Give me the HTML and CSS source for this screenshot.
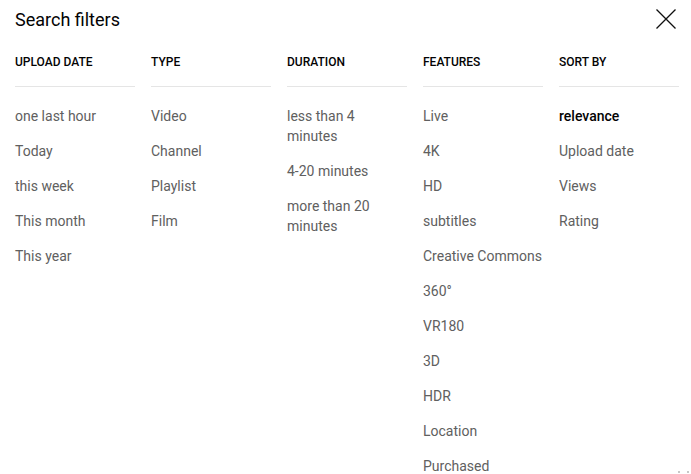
FILE: index.html
```html
<!DOCTYPE html>
<html lang="en">
<head>
<meta charset="utf-8">
<title>Search filters</title>
<link rel="stylesheet" href="styles.css">
</head>
<body>
<div class="dialog">
  <div class="title-row">
    <h2 class="title">Search filters</h2>
    <button class="close" aria-label="Close">
      <svg width="20" height="20" viewBox="0 0 20 20"><path d="M0.5 0.5 L19.5 19.5 M19.5 0.5 L0.5 19.5" stroke="#0f0f0f" stroke-width="1.3" fill="none"/></svg>
    </button>
  </div>
  <div class="groups">
    <div class="group">
      <h4 class="group-head">Upload date</h4>
      <ul class="options">
        <li>one last hour</li>
        <li>Today</li>
        <li>this week</li>
        <li>This month</li>
        <li>This year</li>
      </ul>
    </div>
    <div class="group">
      <h4 class="group-head">Type</h4>
      <ul class="options">
        <li>Video</li>
        <li>Channel</li>
        <li>Playlist</li>
        <li>Film</li>
      </ul>
    </div>
    <div class="group">
      <h4 class="group-head">Duration</h4>
      <ul class="options">
        <li>less than 4 minutes</li>
        <li>4-20 minutes</li>
        <li>more than 20 minutes</li>
      </ul>
    </div>
    <div class="group">
      <h4 class="group-head">Features</h4>
      <ul class="options">
        <li>Live</li>
        <li>4K</li>
        <li>HD</li>
        <li>subtitles</li>
        <li>Creative Commons</li>
        <li>360°</li>
        <li>VR180</li>
        <li>3D</li>
        <li>HDR</li>
        <li>Location</li>
        <li>Purchased</li>
      </ul>
    </div>
    <div class="group">
      <h4 class="group-head">Sort by</h4>
      <ul class="options">
        <li class="selected">relevance</li>
        <li>Upload date</li>
        <li>Views</li>
        <li>Rating</li>
      </ul>
    </div>
  </div>
  <div class="grip"><span></span><span></span></div>
</div>
</body>
</html>
```
FILE: styles.css
```css
html, body {
  margin: 0;
  padding: 0;
  background: #ffffff;
  overflow: hidden;
}
body {
  font-family: Roboto, "Liberation Sans", Arial, sans-serif;
  color: #030303;
}
.dialog {
  position: relative;
  width: 691px;
  height: 474px;
  overflow: hidden;
}
.title-row {
  display: flex;
  justify-content: space-between;
  align-items: flex-start;
  padding: 8px 15px 0 15px;
}
.title {
  margin: 0;
  font-size: 18px;
  line-height: 24px;
  font-weight: 400;
  color: #030303;
}
.close {
  margin-top: 1px;
  padding: 0;
  border: 0;
  background: none;
  width: 20px;
  height: 20px;
  display: block;
}
.close svg {
  display: block;
}
.groups {
  display: flex;
  gap: 16px;
  padding: 22px 15px 0 15px;
}
.group {
  width: 120px;
  flex: 0 0 120px;
}
.group-head {
  margin: 0;
  font-size: 12px;
  line-height: 16px;
  font-weight: 500;
  text-transform: uppercase;
  color: #030303;
  padding-bottom: 16px;
  border-bottom: 1px solid #e5e5e5;
}
.options {
  list-style: none;
  margin: 0;
  padding: 19px 0 0 0;
  display: flex;
  flex-direction: column;
  gap: 15px;
}
.options li {
  font-size: 14px;
  line-height: 20px;
  color: #606060;
}
.options li.selected {
  color: #030303;
  font-weight: 500;
}
.grip {
  position: absolute;
  right: 2px;
  bottom: 1px;
  display: flex;
  gap: 7px;
}
.grip span {
  width: 2px;
  height: 2px;
  background: #c8c8c8;
}
```
